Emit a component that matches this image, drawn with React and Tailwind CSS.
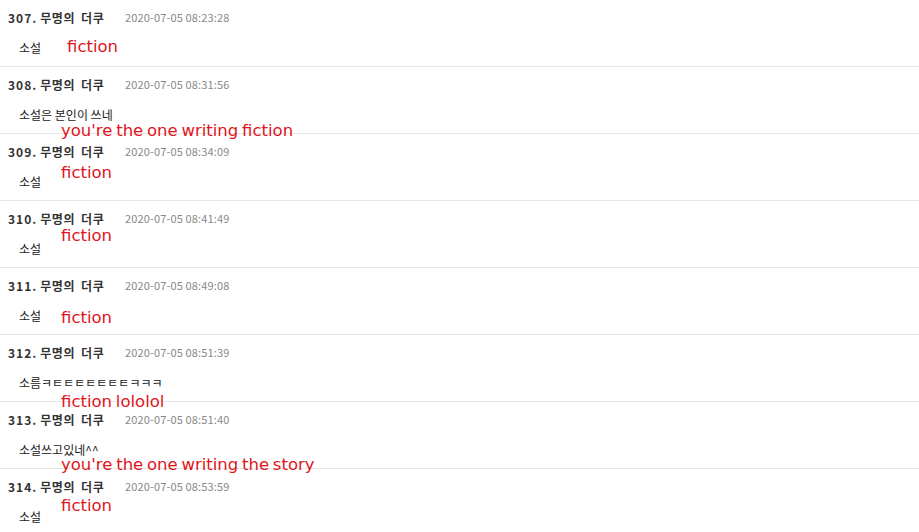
const comments = [
    { no: 307, time: "2020-07-05 08:23:28", body: "소설", note: "fiction", noteX: 67, noteY: 48 },
    { no: 308, time: "2020-07-05 08:31:56", body: "소설은 본인이 쓰네", note: "you're the one writing fiction", noteX: 61, noteY: 65 },
    { no: 309, time: "2020-07-05 08:34:09", body: "소설", note: "fiction", noteX: 61, noteY: 40 },
    { no: 310, time: "2020-07-05 08:41:49", body: "소설", note: "fiction", noteX: 61, noteY: 36 },
    { no: 311, time: "2020-07-05 08:49:08", body: "소설", note: "fiction", noteX: 61, noteY: 51 },
    { no: 312, time: "2020-07-05 08:51:39", body: "소름ㅋㅌㅌㅌㅌㅌㅌㅌㅋㅋㅋ", note: "fiction lololol", noteX: 61, noteY: 68 },
    { no: 313, time: "2020-07-05 08:51:40", body: "소설쓰고있네^^", note: "you're the one writing the story", noteX: 61, noteY: 64 },
    { no: 314, time: "2020-07-05 08:53:59", body: "소설", note: "fiction", noteX: 61, noteY: 38 },
];

const Comment = ({ c }) => {
    return (
        <div className="relative h-[67px] border-b border-[#e6e6e6]">
            <div className="flex h-[35px] items-center pl-2">
                <span className="flex w-[117px] text-[12px] font-bold text-[#333]">
                    <span className="tracking-[1px]">{c.no}.</span>
                    <span className="ml-[3px] tracking-[0.6px]">무명의</span>
                    <span className="ml-[6px] tracking-[0.6px]">더쿠</span>
                </span>
                <span className="text-[11px] tracking-[0.15px] text-[#888]">{c.time}</span>
            </div>
            <div className="pl-[19px] pt-[1px] text-[12px] leading-[24px] text-[#222]">{c.body}</div>
            {/* red annotation laid over the comment */}
            <span
                className="absolute whitespace-nowrap text-[16.5px] leading-none [word-spacing:-1.5px] text-[#e0141c] font-['DejaVu_Sans',sans-serif]"
                style={{ left: c.noteX, top: c.noteY - 9 }}
            >
                {c.note}
            </span>
        </div>
    );
};

const App = () => {
    return (
        <div className="h-[532px] w-[919px] overflow-hidden bg-white font-['Noto_Sans_CJK_KR','Liberation_Sans',sans-serif]">
            {
                comments.map(c => <Comment key={c.no} c={c}></Comment>)
            }
        </div>
    );
};

export default App;
